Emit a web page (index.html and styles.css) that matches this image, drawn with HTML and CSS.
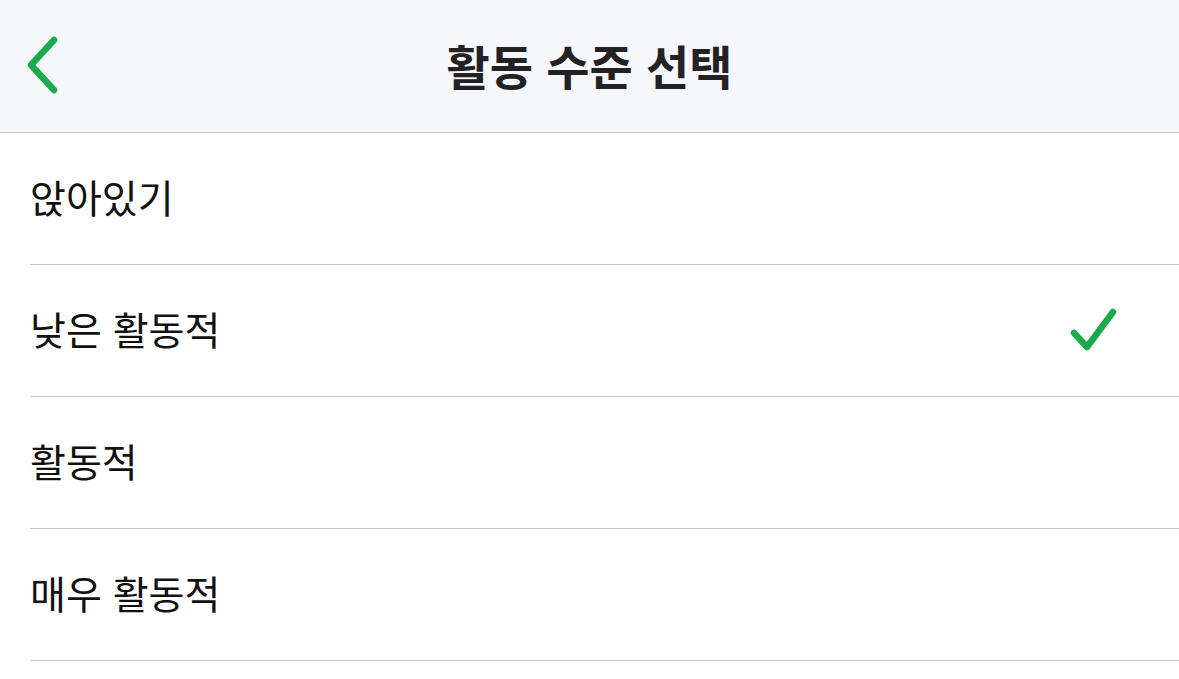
FILE: index.html
```html
<!DOCTYPE html>
<html lang="ko">
<head>
<meta charset="utf-8">
<title>활동 수준 선택</title>
<link rel="stylesheet" href="styles.css">
</head>
<body>
<header class="nav">
  <button class="back" aria-label="뒤로">
    <svg width="40" height="62" viewBox="0 0 40 62"><path d="M31 5 L8 30 L31 55" fill="none" stroke="#1aab4a" stroke-width="6.5" stroke-linecap="round" stroke-linejoin="round"/></svg>
  </button>
  <h1 class="title">활동 수준 선택</h1>
</header>
<ul class="list">
  <li class="row">앉아있기</li>
  <li class="row">낮은 활동적
    <svg class="check" width="50" height="48" viewBox="0 0 50 48"><path d="M5 27 L18 41 L44 6" fill="none" stroke="#1aab4a" stroke-width="6.5" stroke-linecap="round" stroke-linejoin="round"/></svg>
  </li>
  <li class="row">활동적</li>
  <li class="row">매우 활동적</li>
</ul>
</body>
</html>
```
FILE: styles.css
```css
* { box-sizing: border-box; }
html, body { margin: 0; padding: 0; background: #ffffff; }
body {
  font-family: "Noto Sans CJK KR", "Noto Sans", sans-serif;
  color: #1c1c1e;
  width: 1179px;
  height: 679px;
  overflow: hidden;
}
.nav {
  height: 133px;
  background: #f6f7fb;
  border-bottom: 1px solid #c6c6cb;
  display: flex;
  align-items: center;
  justify-content: center;
  position: relative;
}
.back {
  position: absolute;
  left: 23px;
  top: 35px;
  border: 0;
  background: none;
  padding: 0;
  display: flex;
}
.title {
  margin: 0;
  font-size: 47px;
  font-weight: 700;
  color: #222224;
  margin-top: -4px;
}
.list {
  list-style: none;
  margin: 0;
  padding: 0 0 0 30px;
}
.row {
  height: 132px;
  border-bottom: 1px solid #c8c8cc;
  display: flex;
  align-items: center;
  justify-content: space-between;
  font-size: 39px;
  font-weight: 400;
  color: #111111;
  padding-right: 60px;
  padding-bottom: 6px;
}
.check { margin-top: 4px; }
```
